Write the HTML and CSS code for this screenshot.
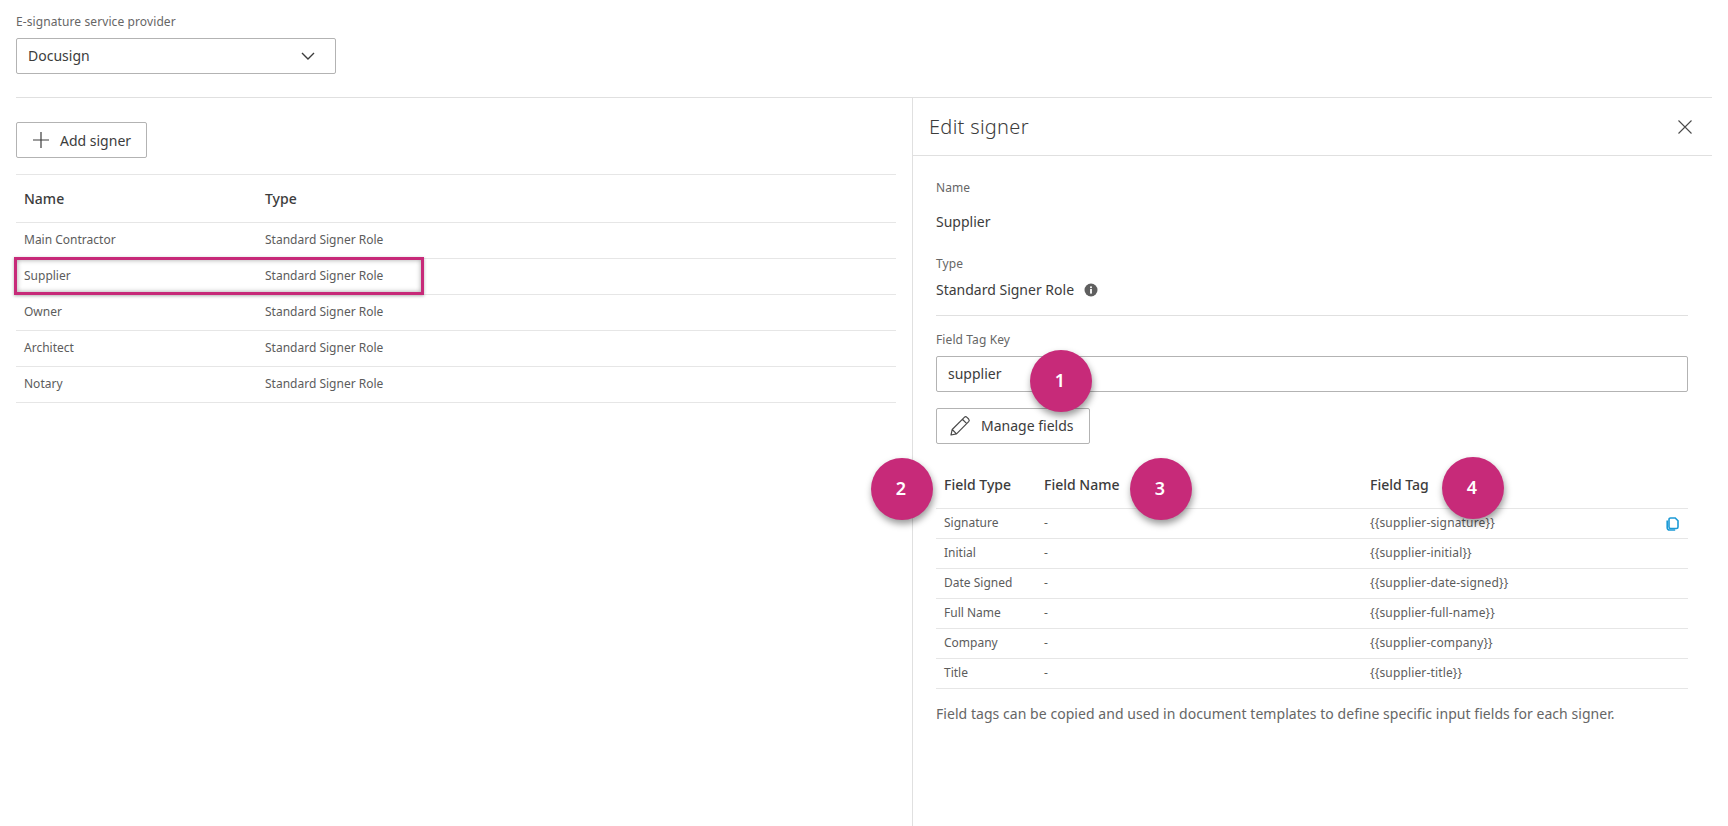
FILE: index.html
```html
<!DOCTYPE html>
<html lang="en">
<head>
<meta charset="utf-8">
<title>Edit signer</title>
<link rel="stylesheet" href="styles.css">
</head>
<body>
<div class="page">
  <section class="provider">
    <div class="label">E-signature service provider</div>
    <div class="select">
      <span>Docusign</span>
      <svg class="chev" width="14" height="8" viewBox="0 0 14 8"><path d="M1 1l6 6 6-6" fill="none" stroke="#3c3c3c" stroke-width="1.4"/></svg>
    </div>
  </section>
  <main class="split">
    <section class="left">
      <button class="btn add-btn">
        <svg width="16" height="16" viewBox="0 0 16 16"><path d="M8 0v16M0 8h16" fill="none" stroke="#3c3c3c" stroke-width="1.2"/></svg>
        <span>Add signer</span>
      </button>
      <div class="signers">
        <div class="s-row s-head"><span>Name</span><span>Type</span></div>
        <div class="s-row"><span>Main Contractor</span><span>Standard Signer Role</span></div>
        <div class="s-row"><span>Supplier</span><span>Standard Signer Role</span></div>
        <div class="s-row"><span>Owner</span><span>Standard Signer Role</span></div>
        <div class="s-row"><span>Architect</span><span>Standard Signer Role</span></div>
        <div class="s-row"><span>Notary</span><span>Standard Signer Role</span></div>
        <div class="highlight"></div>
      </div>
    </section>
    <aside class="panel">
      <header class="panel-head">
        <h2>Edit signer</h2>
        <svg width="14" height="14" viewBox="0 0 14 14"><path d="M0.5 0.5l13 13M13.5 0.5l-13 13" fill="none" stroke="#4a4a4a" stroke-width="1.1"/></svg>
      </header>
      <div class="panel-body">
        <div class="label">Name</div>
        <div class="value name-value">Supplier</div>
        <div class="label type-label">Type</div>
        <div class="value type-value">Standard Signer Role
          <svg width="14" height="14" viewBox="0 0 14 14"><circle cx="7" cy="7" r="6.5" fill="#5f5f5f"/><rect x="6.1" y="6" width="1.8" height="4.6" fill="#fff"/><rect x="6.1" y="3.4" width="1.8" height="1.7" fill="#fff"/></svg>
        </div>
        <div class="rule"></div>
        <div class="label key-label">Field Tag Key</div>
        <div class="input">supplier</div>
        <button class="btn manage-btn">
          <svg width="24" height="24" viewBox="0 0 20 20"><path d="M2.5 17.5l1-4.6L13.6 2.8a1.6 1.6 0 0 1 2.2 0l1.400 1.400a1.600 1.600 0 0 1 0 2.200L7.100 16.500zM3.500 12.900l3.600 3.600M12 4.400l3.600 3.600" fill="none" stroke="#4a4a4a" stroke-width="1" stroke-linejoin="round"/></svg>
          <span>Manage fields</span>
        </button>
        <div class="fields">
          <div class="f-row f-head"><span>Field Type</span><span>Field Name</span><span>Field Tag</span></div>
          <div class="f-row"><span>Signature</span><span>-</span><span class="tag">{{supplier-signature}}</span>
            <svg class="copy" width="13" height="14" viewBox="0 0 13 14"><path d="M4.500 1h4.700L12 3.800v6.200a1.500 1.500 0 0 1-1.500 1.500h-6A1.500 1.500 0 0 1 3 10V2.500A1.500 1.500 0 0 1 4.500 1z" fill="none" stroke="#1c9ad6" stroke-width="1.600"/><path d="M1.200 3.500v7.300a2.200 2.200 0 0 0 2.200 2.200h5.800" fill="none" stroke="#1c9ad6" stroke-width="1.600"/></svg>
          </div>
          <div class="f-row"><span>Initial</span><span>-</span><span class="tag">{{supplier-initial}}</span></div>
          <div class="f-row"><span>Date Signed</span><span>-</span><span class="tag">{{supplier-date-signed}}</span></div>
          <div class="f-row"><span>Full Name</span><span>-</span><span class="tag">{{supplier-full-name}}</span></div>
          <div class="f-row"><span>Company</span><span>-</span><span class="tag">{{supplier-company}}</span></div>
          <div class="f-row"><span>Title</span><span>-</span><span class="tag">{{supplier-title}}</span></div>
        </div>
        <p class="note">Field tags can be copied and used in document templates to define specific input fields for each signer.</p>
      </div>
    </aside>
  </main>
  <div class="badge b1">1</div>
  <div class="badge b2">2</div>
  <div class="badge b3">3</div>
  <div class="badge b4">4</div>
</div>
</body>
</html>
```
FILE: styles.css
```css
* { box-sizing: border-box; }
html, body { margin: 0; height: 100%; background: #fff; overflow: hidden; }
body { font-family: "Noto Sans", Roboto, sans-serif; color: #3c3c3c; font-size: 12px; }
.page { position: relative; height: 826px; padding: 0 16px; }

.label { font-size: 12px; line-height: 16px; color: #666; letter-spacing: .1px; }
.provider { height: 97px; padding-top: 14px; }
.select {
  width: 320px; height: 36px; margin-top: 8px; padding: 0 20px 1px 11px;
  display: flex; align-items: center; justify-content: space-between;
  border: 1px solid #b3b3b3; border-radius: 2px;
  font-size: 14px;
}

.split { display: flex; border-top: 1px solid #e0e0e0; height: 729px; }
.left { width: 880px; padding-top: 24px; flex: none; }
.btn {
  display: flex; align-items: center; background: #fff; color: #3c3c3c;
  border: 1px solid #b3b3b3; border-radius: 2px; height: 36px; padding: 0;
  font: inherit; font-size: 14px;
}
.add-btn { width: 131px; padding-left: 16px; gap: 11px; }

.signers { position: relative; margin-top: 16px; border-top: 1px solid #e6e6e6; }
.s-row {
  display: grid; grid-template-columns: 241px 1fr; padding: 0 0 2px 8px;
  height: 36px; align-items: center;
  border-bottom: 1px solid #e6e6e6; font-size: 12px; color: #5c5c5c;
}
.s-head { height: 48px; font-size: 14px; font-weight: 500; color: #3c3c3c; padding-bottom: 0; }
.highlight {
  position: absolute; left: -2px; top: 82px; width: 410px; height: 38px;
  border: 3px solid #c72a79;
  box-shadow: inset 0 0 5px rgba(0,0,0,.35), 0 1px 3px rgba(0,0,0,.3);
}

.panel { margin-left: 16px; width: 800px; flex: none; border-left: 1px solid #e0e0e0; }
.panel-head {
  height: 58px; padding: 0 20px 0 16px; display: flex; align-items: center;
  justify-content: space-between; border-bottom: 1px solid #e0e0e0;
}
.panel-head h2 { margin: 0; font-size: 20px; font-weight: 300; letter-spacing: .3px; color: #3c3c3c; }
.panel-body { padding: 24px 24px 0 23px; }
.value { font-size: 14px; color: #3c3c3c; }
.name-value { margin-top: 16px; line-height: 20px; }
.type-label { margin-top: 24px; }
.type-value { margin-top: 8px; line-height: 20px; display: flex; align-items: center; gap: 10px; }
.rule { margin-top: 15px; border-top: 1px solid #e0e0e0; }
.key-label { margin-top: 16px; }
.input {
  margin-top: 8px; height: 36px; padding: 0 11px 1px; display: flex; align-items: center;
  border: 1px solid #b3b3b3; border-radius: 2px; font-size: 14px;
}
.manage-btn { margin-top: 16px; width: 154px; padding: 0 0 1px 11px; gap: 9px; }

.fields { margin-top: 16px; }
.f-row {
  position: relative; display: grid; grid-template-columns: 100px 326px 1fr; padding: 0 0 2px 8px;
  height: 30px; align-items: center; border-bottom: 1px solid #e6e6e6; font-size: 12px; color: #5c5c5c;
}
.f-head { height: 49px; font-size: 14px; font-weight: 500; color: #3c3c3c; padding-bottom: 0; }
.tag { letter-spacing: .15px; }
.copy { position: absolute; right: 9px; top: 8px; }
.note { margin: 16px 0 0; font-size: 14px; line-height: 18px; color: #666; letter-spacing: .05px; }

.badge {
  position: absolute; width: 62px; height: 62px; border-radius: 50%;
  display: flex; align-items: center; justify-content: center;
  background: #c72a79; color: #fff; font-size: 18px; font-weight: 600;
  box-shadow: 1px 4px 7px rgba(0,0,0,.4);
  padding: 0 2px 2px 0;
}
.b1 { left: 1030px; top: 350px; }
.b2 { left: 871px; top: 458px; }
.b3 { left: 1130px; top: 458px; }
.b4 { left: 1442px; top: 457px; }
```
